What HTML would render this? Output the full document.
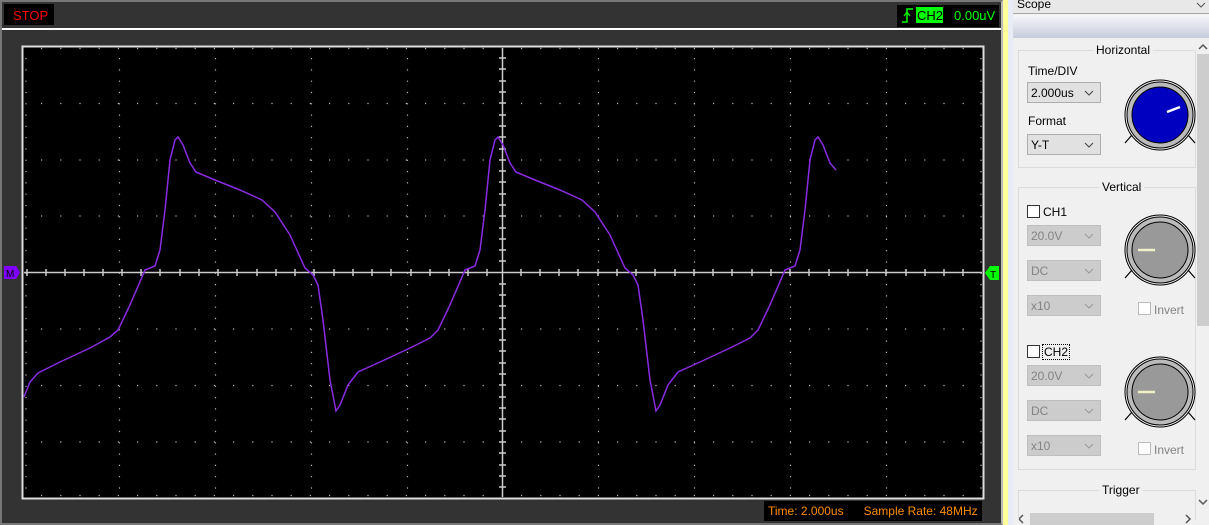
<!DOCTYPE html>
<html><head><meta charset="utf-8"><style>
*{margin:0;padding:0;box-sizing:border-box}
body{width:1209px;height:525px;overflow:hidden;background:#f0f0f0;font-family:"Liberation Sans",Arial,sans-serif;position:relative}
.a{position:absolute}
.dd{position:absolute;width:74px;height:21px;border:1px solid #adadad;background:#e1e1e1;font-size:12px;padding:3px 0 0 3px;color:#000}
.dd.dis{background:#ccc;border-color:#bfbfbf;color:#838383}
.dd svg{position:absolute;right:6px;top:7px}
.lbl{position:absolute;font-size:12px;color:#000}
.grp{position:absolute;border:1px solid #dcdcdc}
.gt{position:absolute;background:#f0f0f0;font-size:12px;padding:0 3px;top:-8px}
.cb{position:absolute;width:13px;height:13px;border:1px solid #333;background:#fff}
</style></head><body>
<div class="a" style="left:0;top:0;width:1003px;height:525px;background:#333;border:2px solid #777;border-right:2px solid #bbb"></div>
<div class="a" style="left:4px;top:4px;width:50px;height:21px;background:#000;color:#f00;font-size:13px;padding:4px 0 0 9px">STOP</div>
<div class="a" style="left:2px;top:28px;width:999px;height:2px;background:#fff"></div>
<div class="a" style="left:897px;top:5px;width:102px;height:22px;background:#000"></div>
<svg class="a" style="left:900px;top:6px" width="16" height="18"><path d="M2 16 H7 V3 H13" stroke="#00ff00" stroke-width="1.5" fill="none"/><path d="M4 10 L7 6 L10 10" stroke="#00ff00" stroke-width="1.2" fill="none"/></svg>
<div class="a" style="left:916px;top:7px;width:27px;height:16px;background:#00ff00;color:#000;font-size:13px;padding:1px 0 0 1px">CH2</div>
<div class="a" style="left:954px;top:8px;color:#00ff00;font-size:13px">0.00uV</div>
<div class="a" style="left:1003px;top:0;width:5px;height:525px;background:#ffff99"></div>
<div class="a" style="left:1008px;top:0;width:5px;height:525px;background:#e8ecf4"></div>
<svg class="a" style="left:0;top:0" width="1003" height="525">
<rect x="22.5" y="46.5" width="961" height="452" fill="#000" stroke="#ddd" stroke-width="2"/>
<g stroke="#bbb" stroke-width="1.2" stroke-dasharray="1.2 18" fill="none">
<path d="M24 103.5H982M24 160H982M24 216H982M24 329H982M24 385.5H982M24 442H982M24 48.5H982M24 495.5H982" stroke-dashoffset="-17"/>
</g>
<g stroke="#bbb" stroke-width="1.2" stroke-dasharray="1.2 10.1" fill="none">
<path d="M119.5 48V497M215.5 48V497M311.5 48V497M407.5 48V497M598.5 48V497M694.5 48V497M790.5 48V497M886.5 48V497M26 48V497M981 48V497" stroke-dashoffset="-10"/>
</g>
<g stroke="#ccc" stroke-width="1.5">
<path d="M24 272.5H982M502.5 48V497"/>
<path d="M27 269V276M46 269V276M65 269V276M84 269V276M103 269V276M122 269V276M141 269V276M160 269V276M180 269V276M199 269V276M218 269V276M237 269V276M257 269V276M276 269V276M295 269V276M314 269V276M334 269V276M353 269V276M372 269V276M391 269V276M411 269V276M430 269V276M449 269V276M468 269V276M487 269V276M521 269V276M540 269V276M559 269V276M578 269V276M598 269V276M617 269V276M636 269V276M655 269V276M675 269V276M694 269V276M713 269V276M732 269V276M752 269V276M771 269V276M790 269V276M809 269V276M829 269V276M848 269V276M867 269V276M886 269V276M906 269V276M925 269V276M944 269V276M963 269V276"/>
<path d="M499 58H506M499 69H506M499 81H506M499 92H506M499 103H506M499 115H506M499 126H506M499 137H506M499 149H506M499 160H506M499 171H506M499 182H506M499 194H506M499 205H506M499 216H506M499 228H506M499 239H506M499 250H506M499 261H506M499 284H506M499 295H506M499 306H506M499 318H506M499 329H506M499 340H506M499 351H506M499 363H506M499 374H506M499 385H506M499 397H506M499 408H506M499 419H506M499 431H506M499 442H506M499 453H506M499 465H506M499 476H506M499 487H506"/>
</g>
<polyline fill="none" stroke="#8a2be2" stroke-width="1.5" points="24,397 30,382 38,373 60,362 90,348 110,337 118,330 130,305 145,270 155,266 160,250 165,210 170,160 175,140 178,137 183,145 190,163 196,172 215,180 240,190 262,200 275,212 290,235 305,268 313,275 318,285 323,320 330,380 336,411 340,405 348,385 358,372 380,362 410,348 430,338 438,330 450,305 465,270 475,266 480,250 485,210 490,160 495,140 498,137 503,145 510,163 516,172 535,180 560,190 582,200 595,212 610,235 625,268 633,275 638,285 643,320 650,380 656,411 660,405 668,385 678,372 700,362 730,348 750,338 758,330 770,305 785,270 795,266 800,250 805,210 810,160 815,140 818,137 823,145 830,163 836,170"/>
<path d="M4 266H16L20 272.5L16 279H4Z" fill="#8000ff"/>
<text x="6" y="277" font-size="10" font-family="Liberation Sans" fill="#000">M</text>
<path d="M999 266H990L985 273L990 280H999Z" fill="#00ff00"/>
<text x="990" y="278" font-size="10" font-family="Liberation Sans" fill="#000">T</text>
</svg>
<div class="a" style="left:764px;top:501px;width:218px;height:20px;background:#000;color:#ff8c00;font-size:12px;padding:3px 0 0 4px;white-space:pre">Time: 2.000us      Sample Rate: 48MHz</div>

<div class="a" style="left:1013px;top:0;width:196px;height:14px;background:#e8e8e8;border-bottom:1px solid #aaa;font-size:12px;padding:0 0 0 4px;line-height:8px">Scope</div>
<svg class="a" style="left:1196px;top:1px" width="10" height="8"><path d="M1 2L5 6L9 2" stroke="#555" fill="none"/></svg>
<div class="a" style="left:1013px;top:15px;width:196px;height:23px;background:linear-gradient(#f6f7fb,#c8cbdc)"></div>
<div class="a" style="left:1196px;top:38px;width:13px;height:474px;background:#f0f0f0"></div>
<div class="a" style="left:1197px;top:54px;width:12px;height:272px;background:#cdcdcd"></div>
<svg class="a" style="left:1197px;top:42px" width="12" height="10"><path d="M2 7L6 3L10 7" stroke="#555" stroke-width="1.5" fill="none"/></svg>
<svg class="a" style="left:1197px;top:497px" width="12" height="10"><path d="M2 3L6 7L10 3" stroke="#555" stroke-width="1.5" fill="none"/></svg>
<div class="a" style="left:1013px;top:512px;width:196px;height:13px;background:#f0f0f0"></div>
<div class="a" style="left:1030px;top:513px;width:124px;height:12px;background:#cdcdcd"></div>
<svg class="a" style="left:1016px;top:514px" width="10" height="10"><path d="M7 1L3 5L7 9" stroke="#555" stroke-width="1.5" fill="none"/></svg>
<svg class="a" style="left:1183px;top:514px" width="10" height="10"><path d="M3 1L7 5L3 9" stroke="#555" stroke-width="1.5" fill="none"/></svg>

<div class="grp" style="left:1018px;top:50px;width:178px;height:118px"><div class="gt" style="left:74px">Horizontal</div></div>
<div class="lbl" style="left:1028px;top:64px">Time/DIV</div>
<div class="dd" style="left:1027px;top:82px">2.000us<svg width="10" height="6"><path d="M1 1L5 5L9 1" stroke="#444" fill="none"/></svg></div>
<div class="lbl" style="left:1028px;top:114px">Format</div>
<div class="dd" style="left:1027px;top:134px">Y-T<svg width="10" height="6"><path d="M1 1L5 5L9 1" stroke="#444" fill="none"/></svg></div>
<svg class="a" style="left:1118px;top:75px" width="80" height="80">
<circle cx="42" cy="40" r="35" fill="none" stroke="#000"/><circle cx="42" cy="40" r="33" fill="#bbb" stroke="#000"/>
<circle cx="42" cy="40" r="28" fill="#0000c0" stroke="#000"/>
<path d="M49 37L62 32" stroke="#fff" stroke-width="2.5"/>
<path d="M14 60L7 68M70 60L77 68" stroke="#000" stroke-width="1.2"/>
</svg>

<div class="grp" style="left:1018px;top:187px;width:178px;height:283px"><div class="gt" style="left:80px">Vertical</div></div>
<div class="cb" style="left:1027px;top:205px"></div><div class="lbl" style="left:1043px;top:205px">CH1</div>
<div class="dd dis" style="left:1027px;top:225px">20.0V<svg width="10" height="6"><path d="M1 1L5 5L9 1" stroke="#999" fill="none"/></svg></div>
<div class="dd dis" style="left:1027px;top:260px">DC<svg width="10" height="6"><path d="M1 1L5 5L9 1" stroke="#999" fill="none"/></svg></div>
<div class="dd dis" style="left:1027px;top:295px">x10<svg width="10" height="6"><path d="M1 1L5 5L9 1" stroke="#999" fill="none"/></svg></div>
<div class="cb" style="left:1138px;top:302px;border-color:#bbb"></div><div class="lbl" style="left:1154px;top:303px;color:#838383">Invert</div>
<div class="cb" style="left:1027px;top:345px"></div><div class="lbl" style="left:1042px;top:344px;border:1px dotted #000;padding:0 1px">CH2</div>
<div class="dd dis" style="left:1027px;top:365px">20.0V<svg width="10" height="6"><path d="M1 1L5 5L9 1" stroke="#999" fill="none"/></svg></div>
<div class="dd dis" style="left:1027px;top:400px">DC<svg width="10" height="6"><path d="M1 1L5 5L9 1" stroke="#999" fill="none"/></svg></div>
<div class="dd dis" style="left:1027px;top:435px">x10<svg width="10" height="6"><path d="M1 1L5 5L9 1" stroke="#999" fill="none"/></svg></div>
<div class="cb" style="left:1138px;top:442px;border-color:#bbb"></div><div class="lbl" style="left:1154px;top:443px;color:#838383">Invert</div>
<svg class="a" style="left:1118px;top:210px" width="80" height="80">
<circle cx="42" cy="40" r="35" fill="none" stroke="#000"/><circle cx="42" cy="40" r="33" fill="#bbb" stroke="#000"/>
<circle cx="42" cy="40" r="28" fill="#999" stroke="#000"/>
<path d="M20 40H37" stroke="#f0f0c8" stroke-width="2.5"/>
<path d="M14 60L7 68M70 60L77 68" stroke="#000" stroke-width="1.2"/>
</svg>
<svg class="a" style="left:1118px;top:352px" width="80" height="80">
<circle cx="42" cy="40" r="35" fill="none" stroke="#000"/><circle cx="42" cy="40" r="33" fill="#bbb" stroke="#000"/>
<circle cx="42" cy="40" r="28" fill="#999" stroke="#000"/>
<path d="M20 40H37" stroke="#f0f0c8" stroke-width="2.5"/>
<path d="M14 60L7 68M70 60L77 68" stroke="#000" stroke-width="1.2"/>
</svg>
<div class="grp" style="left:1018px;top:490px;width:178px;height:30px;border-bottom:none"><div class="gt" style="left:80px">Trigger</div></div>
</body></html>
